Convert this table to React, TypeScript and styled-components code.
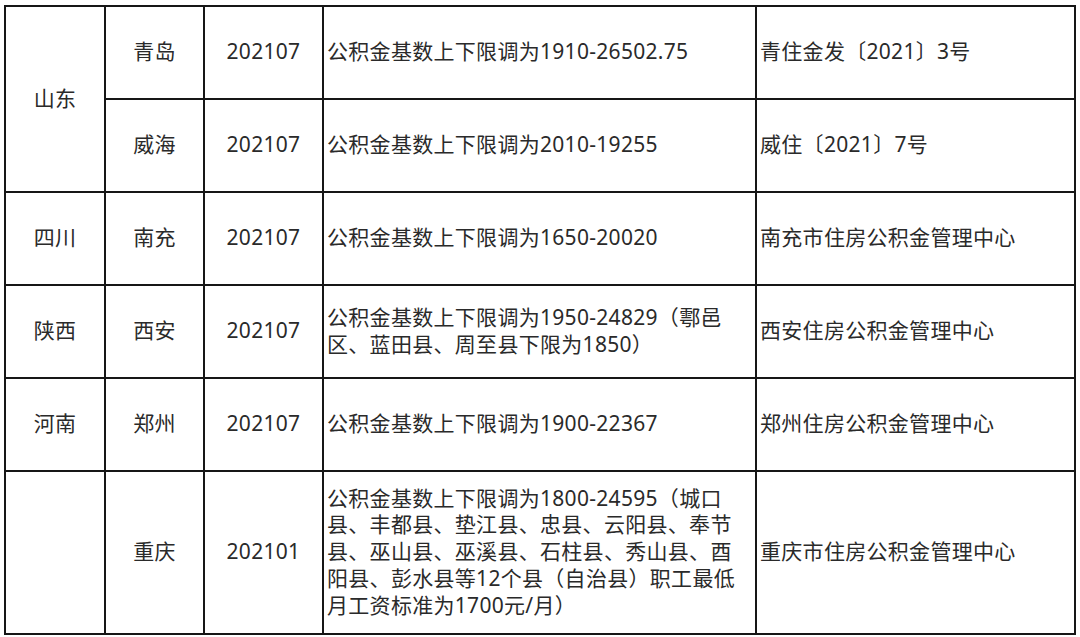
import React from "react";
import styled, { createGlobalStyle } from "styled-components";

const Global = createGlobalStyle`
  html, body { margin: 0; padding: 0; background: #ffffff; }
  body { font-family: "Noto Sans", "Noto Sans CJK SC", sans-serif; }
`;

const Page = styled.div`
  padding: 5px 0 0 4px;
  background: #ffffff;
`;

const Table = styled.div`
  display: grid;
  width: 1072px;
  grid-template-columns: 98px 97px 117px 431px 317px;
  grid-template-rows: repeat(5, 91px) 161px;
  gap: 2px;
  padding: 2px;
  box-sizing: border-box;
  background: #161616;
`;

const Cell = styled.div<{ $align: "center" | "left"; $span?: number }>`
  background: #ffffff;
  display: flex;
  flex-direction: column;
  justify-content: center;
  align-items: ${(p) => (p.$align === "center" ? "center" : "flex-start")};
  padding: 0 ${(p) => (p.$align === "center" ? "0" : "3px")} 2px;
  ${(p) => (p.$span ? `grid-row: span ${p.$span};` : "")}
  font-family: "Noto Sans", "Noto Sans CJK SC", sans-serif;
  font-size: 21px;
  letter-spacing: 0.3px;
  color: #2a2a2a;
  white-space: nowrap;
`;

const Line = styled.span`
  display: block;
  height: 26.7px;
  line-height: 26.7px;
`;

type Row = {
  province?: string;
  provinceSpan?: number;
  city: string;
  date: string;
  desc: string[];
  doc: string;
};

const rows: Row[] = [
  {
    province: "山东",
    provinceSpan: 2,
    city: "青岛",
    date: "202107",
    desc: ["公积金基数上下限调为1910-26502.75"],
    doc: "青住金发〔2021〕3号",
  },
  {
    city: "威海",
    date: "202107",
    desc: ["公积金基数上下限调为2010-19255"],
    doc: "威住〔2021〕7号",
  },
  {
    province: "四川",
    city: "南充",
    date: "202107",
    desc: ["公积金基数上下限调为1650-20020"],
    doc: "南充市住房公积金管理中心",
  },
  {
    province: "陕西",
    city: "西安",
    date: "202107",
    desc: ["公积金基数上下限调为1950-24829（鄠邑", "区、蓝田县、周至县下限为1850）"],
    doc: "西安住房公积金管理中心",
  },
  {
    province: "河南",
    city: "郑州",
    date: "202107",
    desc: ["公积金基数上下限调为1900-22367"],
    doc: "郑州住房公积金管理中心",
  },
  {
    province: "",
    city: "重庆",
    date: "202101",
    desc: [
      "公积金基数上下限调为1800-24595（城口",
      "县、丰都县、垫江县、忠县、云阳县、奉节",
      "县、巫山县、巫溪县、石柱县、秀山县、酉",
      "阳县、彭水县等12个县（自治县）职工最低",
      "月工资标准为1700元/月）",
    ],
    doc: "重庆市住房公积金管理中心",
  },
];

export default function App() {
  return (
    <>
      <Global />
      <Page>
        <Table>
          {rows.map((r, i) => (
            <React.Fragment key={i}>
              {r.province !== undefined && (
                <Cell $align="center" $span={r.provinceSpan}>
                  <Line>{r.province}</Line>
                </Cell>
              )}
              <Cell $align="center">
                <Line>{r.city}</Line>
              </Cell>
              <Cell $align="center">
                <Line>{r.date}</Line>
              </Cell>
              <Cell $align="left">
                {r.desc.map((l, j) => (
                  <Line key={j}>{l}</Line>
                ))}
              </Cell>
              <Cell $align="left">
                <Line>{r.doc}</Line>
              </Cell>
            </React.Fragment>
          ))}
        </Table>
      </Page>
    </>
  );
}
